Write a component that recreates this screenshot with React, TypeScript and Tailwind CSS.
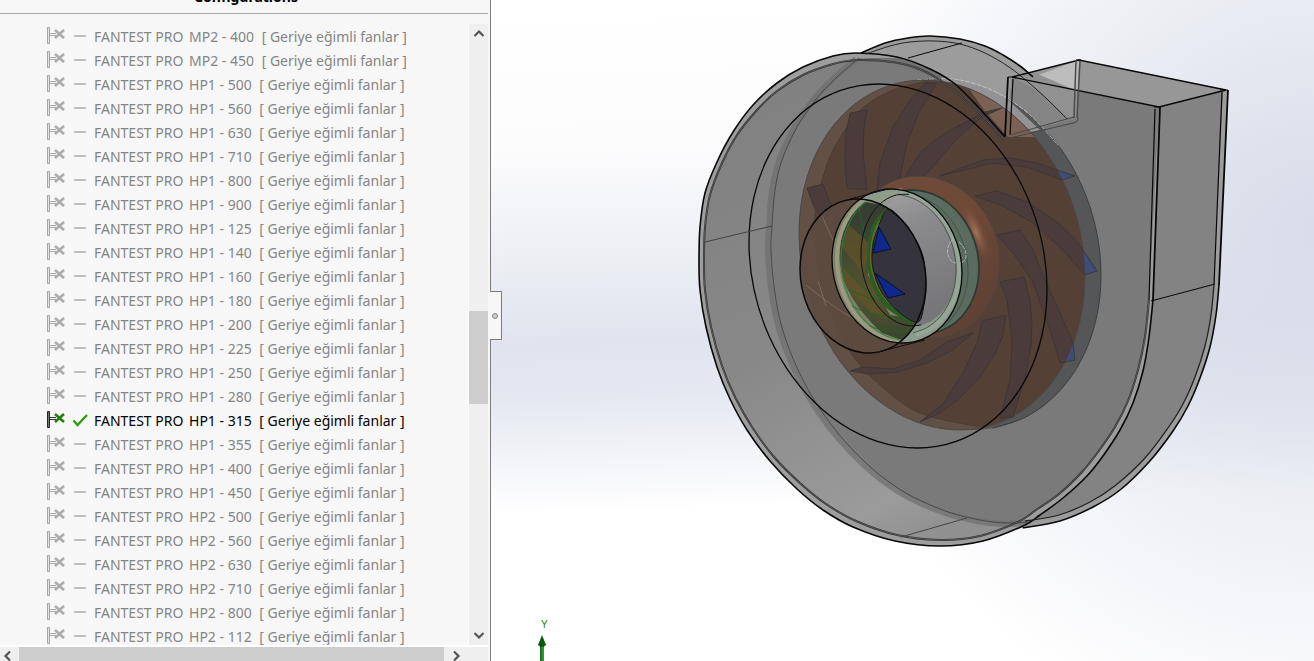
import { useState } from "react";

type Point = [number, number];

const configurations: string[] = [
  ...["400", "450"].map((n) => `MP2 - ${n}`),
  ...["500", "560", "630", "710", "800", "900", "125", "140", "160", "180", "200", "225", "250", "280", "315", "355", "400", "450"].map((n) => `HP1 - ${n}`),
  ...["500", "560", "630", "710", "800", "112"].map((n) => `HP2 - ${n}`),
];

/** Smooth Catmull-Rom curve through the points, as a path string. */
function curve(points: Point[], closed = false, start = "M"): string {
  const n = points.length;
  const at = (i: number): Point => (closed ? points[(i + n) % n] : points[Math.max(0, Math.min(n - 1, i))]);
  let d = `${start}${points[0][0]} ${points[0][1]}`;
  for (let i = 0; i < (closed ? n : n - 1); i++) {
    const [a, b, c, e] = [at(i - 1), at(i), at(i + 1), at(i + 2)];
    d += `C${b[0] + (c[0] - a[0]) / 6} ${b[1] + (c[1] - a[1]) / 6} ${c[0] - (e[0] - b[0]) / 6} ${c[1] - (e[1] - b[1]) / 6} ${c[0]} ${c[1]}`;
  }
  return closed ? d + "Z" : d;
}

/** A circle seen in the model's oblique projection; angles in degrees, clockwise from the right. */
function oblique(cx: number, cy: number, rx: number, ry: number, skew: number, from = 0, to = 345): Point[] {
  const points: Point[] = [];
  for (let a = from; a <= to; a += 15) {
    const t = (a * Math.PI) / 180;
    points.push([cx + rx * Math.cos(t), cy + ry * Math.sin(t + skew)]);
  }
  return points;
}

const frontOuter: Point[] = [[1005, 137], [980, 109], [955, 84], [930, 69], [897, 57], [857, 53], [833, 56], [803, 67], [777, 83], [753, 105], [733, 132], [717, 162], [705, 193], [700, 227], [699, 260], [700, 290], [706, 327], [717, 367], [730, 399], [747, 430], [770, 461], [797, 489], [823, 510], [853, 527], [895, 541], [940, 546], [983, 541], [1023, 526], [1040, 515], [1063, 498], [1087, 476], [1103, 456], [1120, 430], [1133, 403], [1143, 371], [1149, 337], [1153, 300]];
const frontInner: Point[] = [[1004, 139], [978, 112], [950, 87], [922, 70], [893, 62], [857, 60], [833, 64], [803, 75], [777, 91], [757, 110], [737, 135], [722, 163], [710, 195], [705, 227], [704, 260], [705, 290], [711, 327], [722, 366], [735, 397], [752, 427], [774, 457], [801, 484], [826, 504], [856, 521], [897, 535], [940, 540], [980, 536], [1018, 522], [1036, 510], [1059, 494], [1082, 472], [1098, 452], [1115, 427], [1128, 401], [1138, 370], [1145, 337], [1149, 300]];
const backRight: Point[] = [[1219, 285], [1216, 315], [1210, 347], [1200, 378], [1188, 406], [1173, 431], [1149, 462], [1120, 490], [1093, 507], [1060, 521], [1023, 528]];
const backRightInner: Point[] = [[1214, 285], [1211, 315], [1205, 346], [1195, 377], [1183, 404], [1168, 428], [1145, 458], [1116, 485], [1090, 502], [1059, 515], [1025, 521]];
const backTop: Point[] = [[861, 53], [885, 43], [908, 38], [930, 36], [960, 39], [985, 46], [1003, 55], [1020, 66], [1033, 77]];
const backTopInner: Point[] = [[866, 54], [890, 46], [910, 42], [935, 41], [960, 44], [985, 53], [1009, 67], [1028, 82], [1048, 100], [1067, 119]];
const backHidden: Point[] = [[1030, 522], [1005, 523], [980, 520], [948, 512], [913, 497], [889, 482], [867, 464], [842, 438], [820, 409], [803, 380], [790, 351], [780, 320], [774, 286], [771, 250], [772, 227], [775, 190], [782, 160], [797, 127], [817, 98], [837, 77], [859, 58]];
const inletHole = oblique(898, 266, 149, 182, 0.13);
const disc = oblique(942, 255, 143, 175, 0.125);
const backPlate = oblique(955, 254, 146, 176, 0.12);
const discRim: Point[] = [[927, 81], [893, 90], [865, 106], [847, 127], [832, 152], [823, 177], [816, 205], [815, 233], [819, 275], [830, 312], [850, 352], [880, 385], [920, 413], [980, 427]];

const blades: Point[][] = [
  [[850, 113], [867, 110], [864, 127], [863, 153], [867, 190], [847, 188], [845, 160], [846, 133]],
  [[925, 83], [937, 83], [920, 110], [907, 143], [899, 182], [900, 189], [877, 190], [880, 163], [893, 127], [910, 100]],
  [[902, 182], [920, 153], [933, 142], [947, 132], [985, 112], [1002, 108], [980, 118], [953, 143], [933, 167], [925, 175]],
  [[940, 176], [983, 160], [1010, 158], [1037, 163], [1057, 170], [1075, 176], [1062, 180], [1027, 167], [993, 163]],
  [[975, 196], [997, 191], [1027, 202], [1057, 222], [1072, 236], [1083, 250], [1097, 271], [1085, 275], [1063, 250], [1033, 223], [1003, 206]],
  [[997, 235], [1020, 230], [1033, 250], [1045, 280], [1060, 313], [1073, 343], [1075, 360], [1060, 363], [1050, 330], [1032, 280], [1013, 253]],
  [[1000, 282], [1024, 277], [1030, 300], [1032, 323], [1031, 345], [1025, 377], [1013, 417], [1000, 418], [1010, 380], [1012, 340], [1007, 300]],
  [[982, 321], [1006, 315], [1003, 335], [995, 354], [980, 377], [960, 398], [940, 413], [920, 422], [943, 404], [963, 373], [977, 343]],
  [[850, 371], [863, 367], [893, 369], [920, 360], [947, 342], [973, 333], [953, 350], [927, 363], [897, 372], [870, 374]],
  [[807, 188], [823, 184], [838, 223], [846, 248], [830, 229], [814, 207]],
];

const pipeFront = oblique(863, 276, 63, 77, 0.09);
const pipeBack = oblique(897, 266, 65, 77, 0.09);
const pipeInner = oblique(909, 260, 48, 66, 0.09);
const copperOuter = oblique(925, 257, 75, 81, 0.08);
const greenOuter = oblique(918, 262, 61, 72, 0.09);
const throat: Point[] = [[889, 209], [907, 227], [922, 253], [926, 283], [924, 305], [918, 322], [900, 313], [882, 293], [873, 268], [873, 245], [879, 225]];

function TreeIcon({ active }: { active: boolean }) {
  return (
    <svg viewBox="0 0 20 20" className="h-5 w-5 shrink-0" aria-hidden="true">
      <path d="M1.5 1.5h2v16h-2z" fill={active ? "#777" : "#e4e4e4"} stroke={active ? "#222" : "#a3a3a3"} />
      <path d="M4 7.5h6M4 9.5h6" stroke={active ? "#333" : "#aaa"} />
      <path d="m9 4 9 8M18 4l-9 8" stroke={active ? "#267d0d" : "#acacac"} strokeWidth="2.6" />
    </svg>
  );
}

function StateMark({ active }: { active: boolean }) {
  return (
    <svg viewBox="0 0 16 16" className="h-4 w-4 shrink-0" aria-hidden="true">
      {active ? <path d="m1.5 8.5 4 4.5L15 3" fill="none" stroke="#2f9c0c" strokeWidth="2.4" /> : <path d="M2 8h12" stroke="#bdbdbd" strokeWidth="2" />}
    </svg>
  );
}

function Chevron({ d }: { d: string }) {
  return (
    <svg viewBox="0 0 12 12" className="h-3 w-3" aria-hidden="true">
      <path d={d} fill="none" stroke="#555" strokeWidth="2.2" />
    </svg>
  );
}

function FanModel() {
  return (
    <svg viewBox="491 0 823 661" preserveAspectRatio="xMidYMid meet" className="h-full w-full" role="img" aria-label="Fan assembly">
      <defs>
        <linearGradient id="wall" x1="0" y1="0" x2="0.5" y2="1">
          <stop offset="0" stopColor="#7f7f7f" />
          <stop offset="0.55" stopColor="#888888" />
          <stop offset="0.9" stopColor="#9b9b9b" />
          <stop offset="1" stopColor="#909090" />
        </linearGradient>
        <linearGradient id="pipe" x1="0" y1="0" x2="0.3" y2="1">
          <stop offset="0" stopColor="#a5a5a6" />
          <stop offset="0.35" stopColor="#8b8b8d" />
          <stop offset="1" stopColor="#777779" />
        </linearGradient>
        <linearGradient id="copper" x1="0" y1="0" x2="1" y2="1">
          <stop offset="0" stopColor="#6d4b3d" />
          <stop offset="0.5" stopColor="#704937" />
          <stop offset="1" stopColor="#573f34" />
        </linearGradient>
        <linearGradient id="olive" x1="0" y1="0" x2="0" y2="1">
          <stop offset="0" stopColor="#343b31" />
          <stop offset="0.3" stopColor="#3e4432" />
          <stop offset="0.65" stopColor="#57532f" />
          <stop offset="1" stopColor="#394431" />
        </linearGradient>
        <radialGradient id="shine">
          <stop offset="0" stopColor="#a8745e" />
          <stop offset="1" stopColor="#704937" stopOpacity="0" />
        </radialGradient>
        <clipPath id="discClip"><path d={curve(disc, true)} /></clipPath>
        <clipPath id="frontPipeClip"><path d={curve(pipeFront, true)} /></clipPath>
        <clipPath id="backPipeClip"><path d={curve(pipeBack, true)} /></clipPath>
        <clipPath id="plateClip"><path d={curve(backPlate, true)} /></clipPath>
      </defs>

      {/* rear shell and discharge duct */}
      <path d={`${curve(backTop)}L1079 60L1228 90L${curve(backRight, false, "")}L900 500L800 200Z`} fill="#9c9c9c" />
      <path d="M1012 77 1079 60 1226 90 1159 107Z" fill="#979798" />
      <path d="M1012 77 1033 77 1079 60 1077 118 1067 117 1030 80Z" fill="#bdbdbe" />
      <path d={`M1159 107L1223 91L${curve(backRightInner, false, "")}L1060 500L1120 430L1151 323Z`} fill="#838384" />

      {/* front shell */}
      <path d={`${curve(frontOuter)}L1160 107L1012 77Z`} fill="#9d9d9d" />
      <path d={`${curve(frontInner)}L1154 107L1012 77Z`} fill="url(#wall)" />
      <path d={`${curve(backHidden)}L893 61L922 70L950 86L978 111L1006 138L1012 77L1159 107L1149 300${curve(frontInner.slice(-10).reverse(), false, "L")}Z`} fill="#797a79" />
      <path d={curve(backHidden)} fill="none" stroke="#6c6c6c" strokeWidth="6" strokeOpacity="0.65" transform="translate(-3 1)" />
      <path d={curve(backHidden)} fill="none" stroke="#4b4b4b" />
      <path d="M863 58 900 58 940 73 985 114 940 80 905 66Z" fill="#727272" />
      <path d="M1012 77 1079 92 1077 118 1008 136Z" fill="#858585" />
      <path d="M1012 77 1033 72 1070 88 1077 91 1077 118 1067 117 1040 92Z" fill="#919191" />

      {/* impeller */}
      <path d={curve(backPlate, true)} fill="#555658" />
      <path d="M935 80Q965 75 1003 95L1040 130 1008 137 985 108Z" fill="#939396" clipPath="url(#plateClip)" />
      <path d={curve(oblique(955, 254, 146, 176, 0.12, -60, 75))} fill="none" stroke="#3c3d3d" />
      <path d={curve(oblique(955, 254, 146, 176, 0.12, -105, -45))} fill="none" stroke="#dedede" strokeDasharray="5 1" strokeOpacity="0.7" />
      <path d={curve(disc, true)} fill="#544035" />
      <g clipPath="url(#discClip)">
        <path d={`${curve(discRim)}L980 450L780 450L780 70Z`} fill="#625044" />
        <path d="M963 80 1000 100 1037 137 1008 137 984 110Z" fill="#7b6154" />
      </g>
      <path d={curve(discRim)} fill="none" stroke="#443a32" strokeWidth="0.7" />
      <path d={curve(disc, true)} fill="none" stroke="#4b4a4a" />
      {blades.map((blade, i) => (
        <g key={i}>
          <path d={`M${blade.join("L")}Z`} fill="#3d4d78" />
          <path d={`M${blade.join("L")}Z`} fill="#4c3b3b" clipPath="url(#discClip)" />
          <path d={`M${blade.join("L")}Z`} fill="none" stroke="#393431" strokeWidth="0.8" />
        </g>
      ))}

      {/* inlet cone */}
      <path d={curve(copperOuter, true)} fill="url(#copper)" stroke="#454545" strokeWidth="0.8" />
      <ellipse cx="976" cy="232" rx="9" ry="32" transform="rotate(-22 976 232)" fill="url(#shine)" />
      <path d={curve(greenOuter, true)} fill="#596c5d" stroke="#2f3a34" strokeWidth="1.8" />
      <path d={curve(pipeBack, true)} fill="#8b9c8d" />
      <path d={curve(pipeFront, true)} fill="#5e4b40" fillOpacity="0.9" />
      <path d="M822 216 832 238 849 265M806 285Q835 309 855 319M818 281 826 306" fill="none" stroke="#7e7066" strokeWidth="0.8" />
      <path d={curve(pipeInner, true)} fill="url(#pipe)" />
      <g clipPath="url(#frontPipeClip)">
        <path d={curve(pipeBack, true)} fill="#80806b" />
        <g clipPath="url(#backPipeClip)">
          <path d="M861 200Q837 229 840 263T882 333L904 341 925 320 890 315 868 275 872 228 896 204Z" fill="url(#olive)" />
          <path d="M849 225 870 244 864 274 841 246ZM843 267 871 299 888 320 872 314 844 281Z" fill="#605329" fillOpacity="0.75" />
          <path d="M858 204 865 237M843 265 876 301 850 290M850 305Q875 320 925 318M866 325Q888 334 916 331" fill="none" stroke="#1d651d" strokeWidth="0.9" />
          <path d={curve(oblique(900, 266, 63, 76, 0.09, 90, 255))} fill="none" stroke="#9a9a80" strokeWidth="4" />
          <path d={curve(oblique(903, 266, 62, 75, 0.09, 90, 255))} fill="none" stroke="#23893a" />
          <path d={curve([[891, 207], [875, 225], [870, 250], [872, 277], [886, 304], [913, 322]])} fill="none" stroke="#285f21" strokeWidth="5" />
          <path d={curve([[889, 210], [876, 227], [871, 250], [873, 275], [887, 301], [915, 321]])} fill="none" stroke="#98672e" strokeWidth="0.8" />
        </g>
      </g>
      <path d={curve(throat, true)} fill="#35343c" stroke="#161a16" />
      <path d="M879 227 891 249 873 253ZM875 273 905 294 888 298Z" fill="#10288b" stroke="#07102f" />
      <path d="M860 201 888 190 903 188 887 206Z" fill="#929b87" fillOpacity="0.75" />
      <path d={curve(oblique(900, 264, 59, 72, 0.09, -90, 75))} fill="none" stroke="#96a797" strokeWidth="4" />
      <path d={curve(oblique(907, 265, 61, 72, 0.09, -75, 60))} fill="none" stroke="#424c46" strokeWidth="0.8" />
      <path d={curve(oblique(898, 264, 58, 70, 0.09, -90, 75))} fill="none" stroke="#3f4942" strokeWidth="0.8" />
      <path d="M952 240q-6 8-4 15t8 8M959 242q7 6 7 13t-6 8" fill="none" stroke="#c0c5bf" strokeDasharray="4 1" strokeOpacity="0.8" />
      <path d={curve(pipeBack, true)} fill="none" stroke="#080808" strokeWidth="1.3" />
      <path d={curve(oblique(909, 260, 48, 66, 0.09, 75, 270))} fill="none" stroke="#111" />
      <path d={curve(pipeFront, true)} fill="none" stroke="#080808" strokeWidth="1.5" />
      <path d="M850 199 888 189M874 353 925 340" stroke="#111" />
      <path d={curve(inletHole, true)} fill="none" stroke="#080808" strokeWidth="1.3" />

      {/* shell edges */}
      <g fill="none" stroke="#080808">
        <path d={curve(frontOuter)} strokeWidth="1.6" />
        <path d={curve(frontInner)} stroke="#303030" strokeWidth="2" />
        <path d={curve(frontInner)} stroke="#828282" strokeWidth="0.5" />
        <path d={curve(backTop)} strokeWidth="1.6" />
        <path d={curve(backTopInner)} stroke="#252525" />
        <path d={curve(backRight)} strokeWidth="1.6" />
        <path d={curve(backRightInner)} stroke="#222" strokeWidth="1.3" />
        <path d="M1012 77 1079 60 1226 90 1159 107Z" strokeWidth="1.3" />
        <path d="M1008 77 1005 136M1160 107 1153 300M1228 90 1219 285" strokeWidth="1.8" />
        <path d="M1013 79 1010 135M1155 109 1149 300M1222 92 1214 285M1008 77h6M1154 107h7M1220 90h8M1076 60h5" strokeWidth="1.2" />
        <path d="M1076 60 1074 118M1080 61 1077 118" stroke="#4a4a4a" strokeWidth="1.5" />
        <path d="M1002 136Q1005 141 1010 138L1073 123Q1078 122 1078 118M1010 135 1074 117" stroke="#474747" />
        <path d="M705 242 772 226M901 537 967 518" stroke="#444" />
        <path d="M908 58 962 43M1151 301 1215 284" />
      </g>

      {/* orientation triad */}
      <path d="M540 646h4v15h-4z" fill="#2c942f" />
      <path d="M540 646h1.5v15H540z" fill="#126b19" />
      <path d="M542 635 546 645Q542 649 538 645Z" fill="#075b0b" />
      <text x="541" y="628" className="fill-[#178020] font-['Liberation_Sans'] text-[10px]">Y</text>
    </svg>
  );
}

export default function App() {
  const [selected, setSelected] = useState("HP1 - 315");

  return (
    <div className="flex h-screen w-full overflow-hidden bg-white font-['Noto_Sans',sans-serif]">
      <aside className="flex w-[491px] shrink-0 flex-col border-r border-[#7c7c7c] bg-[#f7f7f7]">
        <header className="mr-0.5 flex h-3.5 shrink-0 items-end justify-center overflow-hidden border-b border-[#a5a5a5] pb-2 pl-1">
          <h1 className="text-sm leading-4 font-bold text-black">Configurations</h1>
        </header>

        <div className="mt-2.5 mr-0.5 flex min-h-0 flex-1">
          <ul className="min-w-0 flex-1 overflow-hidden border-r border-white">
            {configurations.map((name) => {
              const active = name === selected;
              return (
                <li key={name}>
                  <button
                    type="button"
                    aria-pressed={active}
                    onClick={() => setSelected(name)}
                    className={`flex h-6 w-full items-center pl-[46px] text-left text-sm whitespace-nowrap ${active ? "text-black" : "text-[#858585]"}`}
                  >
                    <TreeIcon active={active} />
                    <span className="ml-1.5"><StateMark active={active} /></span>
                    <span className="ml-1.5 pt-0.5">
                      FANTEST PRO <span className="ml-0.5">{name}</span> <span className="ml-1">[ Geriye eğimli fanlar ]</span>
                    </span>
                  </button>
                </li>
              );
            })}
          </ul>
          <div className="flex w-[19px] shrink-0 flex-col bg-[#efefef]">
            <button type="button" aria-label="Scroll up" className="flex h-5 shrink-0 items-center justify-center"><Chevron d="m1.5 8 4.5-4.5L10.5 8" /></button>
            <div className="flex min-h-0 flex-1 flex-col">
              <div className="grow-[267]" />
              <div className="grow-[94] bg-[#cdcdcd]" />
              <div className="grow-[221]" />
            </div>
            <button type="button" aria-label="Scroll down" className="flex h-5 shrink-0 items-center justify-center"><Chevron d="m1.5 4 4.5 4.5L10.5 4" /></button>
          </div>
        </div>

        <div className="mr-0.5 flex h-4 shrink-0 items-stretch border-t-2 border-white bg-[#efefef] pr-5">
          <button type="button" aria-label="Scroll left" className="flex w-[19px] shrink-0 items-center justify-center pt-1 pr-1"><Chevron d="M8 1.5 3.5 6 8 10.5" /></button>
          <div className="flex-1 bg-[#cdcdcd]" />
          <button type="button" aria-label="Scroll right" className="flex w-6 shrink-0 items-center justify-center pt-1"><Chevron d="M4 1.5 8.5 6 4 10.5" /></button>
        </div>
      </aside>

      <main className="relative min-w-0 flex-1 bg-[radial-gradient(ellipse_60%_80%_at_100%_35%,#d9dde9_0%,#d9dde900_100%),linear-gradient(178deg,#ffffff_0%,#fcfcfd_22%,#e1e4ee_50%,#e5e8f1_58%,#ffffff_75%)]">
        <FanModel />
        <button type="button" aria-label="Collapse panel" className="absolute top-[291px] -left-px flex h-[49px] w-3 items-center justify-center border border-l-0 border-[#7c7c7c] bg-[#f7f7f7] pr-0.5">
          <span className="h-1.5 w-1.5 rounded-full border border-[#888] bg-[#ccc]" />
        </button>
      </main>
    </div>
  );
}
